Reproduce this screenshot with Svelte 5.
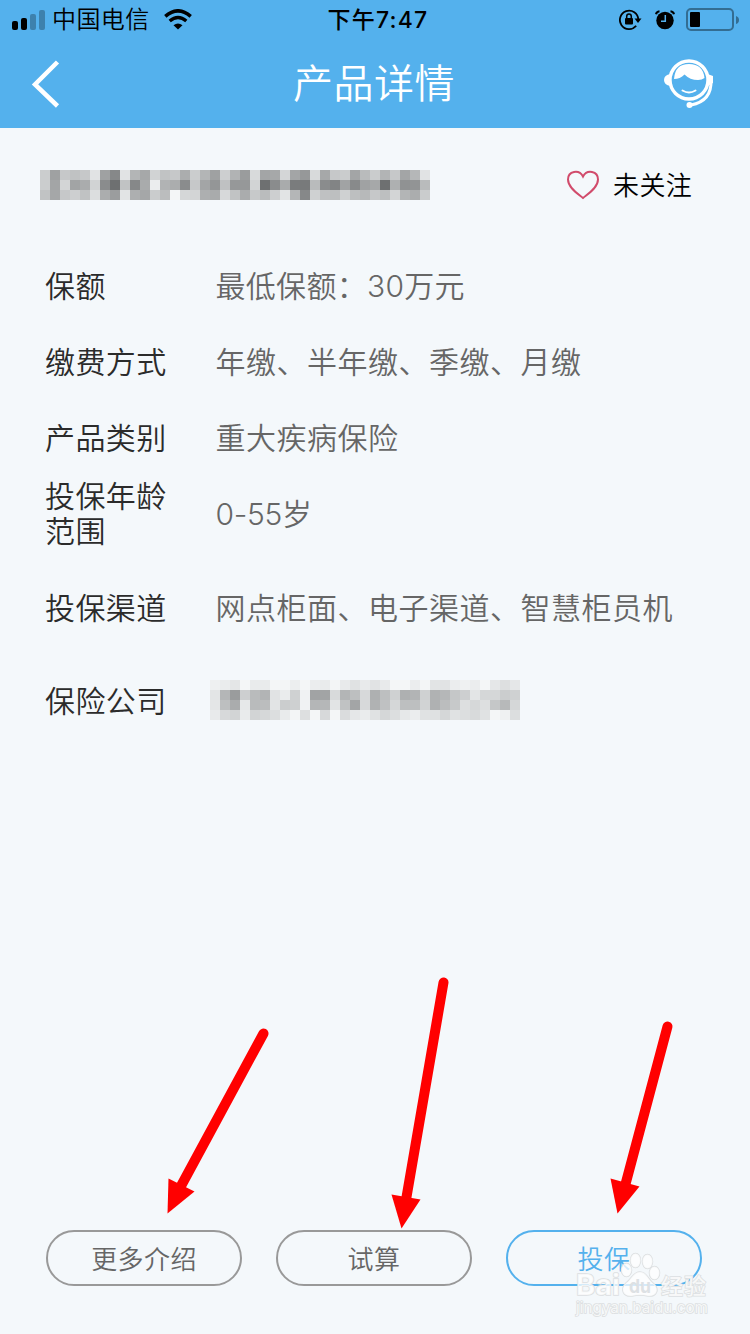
<script>
	// Greyscale levels of the masked texts, one hex pair for each 10px block
	const nameMask = [
		'cb9fc6c0c6e19f86e1b3a6d1c1c6abcbb39fcdb19ad8a3a6d4a396d8a6c6caa3b9cab2c6a3b5e1',
		'cba3d3a2aad18a6ec186a9ebb1ab8ac6a394bf9696d26e8aa97a78b98a82a188a0a66eae9092b9',
		'c1a5c6cdc0dcab9be2ada5cabbf4d5d3ada9d7c1aac7bacde2b486cfbfbdcfbdb7c6bdd3b3abca'
	];
	const companyMask = [
		'eeeae4f4e9e9f4f3ecf4ebe9f3e8e0e8e1e8f4f4ebf3e2e1ebefebf4e5dde5',
		'e3b49acdb9b2e1eacff0a1a2d8b3bdd7aebdcfaeb2cfb0b5c5cde3d5d5cbcf',
		'e4bdaae6b9bbe2cbcef0b4b5e2c0a3d7b0bfd5bdbdd1afbbc7ddd6ddc5b7d5',
		'e8d7d2e9d2d6dce9f3ddf4d7f4dae5eae0d5dce6ebe0dfd5e0dcd8e0f4efdc'
	];

	const rows = [
		{ label: '保额', value: '最低保额：30万元', height: 76, tracking: 0.3 },
		{ label: '缴费方式', value: '年缴、半年缴、季缴、月缴', height: 76 },
		{ label: '产品类别', value: '重大疾病保险', height: 76 },
		{ label: '投保年龄范围', value: '0-55岁', height: 76, tracking: -0.3 },
		{ label: '投保渠道', value: '网点柜面、电子渠道、智慧柜员机', height: 112 },
		{ label: '保险公司', mask: companyMask, height: 74 }
	];

	const actions = [
		{ label: '更多介绍' },
		{ label: '试算' },
		{ label: '投保', primary: true }
	];

	let followed = $state(false);

	function blocks(line) {
		return line.match(/../g).map((v) => {
			const n = parseInt(v, 16);
			return `rgb(${n}, ${Math.min(n + 2, 248)}, ${Math.min(n + 3, 251)})`;
		});
	}
</script>

{#snippet mosaic(mask)}
	<svg class="mosaic" width={mask[0].length * 5} height={mask.length * 10} shape-rendering="crispEdges">
		{#each mask as line, y}
			{#each blocks(line) as fill, x}
				<rect x={x * 10} y={y * 10} width="10" height="10" {fill} />
			{/each}
		{/each}
	</svg>
{/snippet}

<div class="page">
	<header>
		<div class="status">
			<div class="status-left">
				<svg class="signal" width="34" height="20">
					<rect x="0" y="11" width="6" height="9" rx="2" />
					<rect x="9" y="8" width="6" height="12" rx="2" />
					<rect x="18" y="4" width="6" height="16" rx="2" opacity=".27" />
					<rect x="27" y="0" width="6" height="20" rx="2" opacity=".27" />
				</svg>
				<span class="carrier">中国电信</span>
				<svg class="wifi" width="28" height="21" viewBox="0 0 28 21">
					<path d="M1.3 7.3Q14-3.600 26.700 7.300" fill="none" stroke="#000" stroke-width="3.600" />
					<path d="M5.700 12Q14 5 22.300 12" fill="none" stroke="#000" stroke-width="3.400" />
					<path d="M9.500 16.300Q14 12.500 18.500 16.300L14 20.500Z" />
				</svg>
			</div>
			<span class="time">下午7:47</span>
			<div class="status-right">
				<svg width="23" height="22" viewBox="0 0 23 22">
					<path d="M17.200 16.800A9.200 9.200 0 1 1 19.300 10.500" fill="none" stroke="#000" stroke-width="1.800" />
					<path d="M15.500 9.500H22.500L19 14Z" />
					<rect x="6" y="9" width="8" height="6.500" rx="1" />
					<path d="M7.700 9.500V7.500a2.300 2.500 0 0 1 4.600 0V9.500" fill="none" stroke="#000" stroke-width="1.500" />
				</svg>
				<svg class="alarm" width="20" height="20" viewBox="0 0 20 20">
					<circle cx="10" cy="10.500" r="8.700" />
					<path d="M1 4.300Q1.500 1.500 4.500 1.200M15.500 1.200Q18.500 1.500 19 4.300" fill="none" stroke="#000" stroke-width="2" />
					<path d="M10.300 5V11.200H6" fill="none" stroke="#54b1ed" stroke-width="1.500" />
				</svg>
				<svg class="battery" width="54" height="24" viewBox="0 0 54 24">
					<rect x="1" y="1" width="46" height="21" rx="4" fill="none" stroke="#336d92" stroke-width="2" />
					<rect x="4" y="4" width="10" height="15" rx="1" />
					<path d="M50 8Q53 9 53 12T50 16Z" fill="#336d92" />
				</svg>
			</div>
		</div>
		<div class="navbar">
			<button class="back" aria-label="返回">
				<svg width="30" height="50" viewBox="0 0 30 50">
					<path d="M26.500 3L4 25.500L26.500 47" fill="none" stroke="#fff" stroke-width="4.500" />
				</svg>
			</button>
			<h1>产品详情</h1>
			<button class="service" aria-label="客服">
				<svg width="51" height="51" viewBox="0 0 51 51">
					<circle cx="25" cy="21" r="19" fill="none" stroke="#fff" stroke-width="3.400" />
					<path d="M6.500 15Q0 16 0 21T6.500 27ZM43.500 15L49 17V24L43.500 27Z" fill="#fff" />
					<path d="M10 20Q11 5 25 5T40.500 19Q38 21 34 21Q26 21 20.500 15.500Q16 20 10 20Z" fill="#fff" />
					<path d="M18.500 31.500Q25 35.500 31.500 31.500" fill="none" stroke="#fff" stroke-width="2" stroke-linecap="round" />
					<path d="M47 21Q48 42 27 46" fill="none" stroke="#fff" stroke-width="3" />
					<circle cx="25.500" cy="46" r="3" fill="#fff" />
				</svg>
			</button>
		</div>
	</header>

	<section class="product">
		{@render mosaic(nameMask)}
		<button class="follow" onclick={() => (followed = !followed)}>
			<svg width="34" height="30" viewBox="0 0 34 30">
				<path
					d="M17 28C13 24.500 2 18 2 9.500C2 1 13-1 17 6.500C21-1 32 1 32 9.500C32 18 21 24.500 17 28Z"
					fill={followed ? '#d14b6b' : 'none'}
					stroke="#d14b6b"
					stroke-width="2"
				/>
			</svg>
			<span>{followed ? '已关注' : '未关注'}</span>
		</button>
	</section>

	<dl>
		{#each rows as row}
			<div class="row" style="height: {row.height}px">
				<dt>{row.label}</dt>
				<dd class:masked={row.mask} style="letter-spacing: {row.tracking ?? 0.5}px">
					{#if row.mask}
						{@render mosaic(row.mask)}
					{:else}
						{row.value}
					{/if}
				</dd>
			</div>
		{/each}
	</dl>

	<footer>
		{#each actions as action}
			<button class="action" class:primary={action.primary}>{action.label}</button>
		{/each}
	</footer>

	<svg class="arrows" width="750" height="1334" viewBox="0 0 750 1334">
		<g stroke="#f00" stroke-width="10" stroke-linecap="round">
			<path d="M263.500 1033.500L181 1186" />
			<path d="M443.500 982.500L406 1200" />
			<path d="M667.500 1026.500L625 1186" />
		</g>
		<g fill="#f00">
			<path d="M168.500 1178.500L194.500 1191.500L167.500 1213.500Z" />
			<path d="M391.500 1194.500L420.500 1199.500L401.500 1228.500Z" />
			<path d="M610.500 1178.500L639.500 1186.500L617.500 1213.500Z" />
		</g>
	</svg>

	<svg class="watermark" width="150" height="80" viewBox="0 0 150 80">
		<g class="mark">
			<ellipse cx="54.500" cy="27" rx="5" ry="6.500" />
			<ellipse cx="63.500" cy="17.500" rx="5" ry="7" />
			<ellipse cx="75.500" cy="18.500" rx="5" ry="7" />
			<ellipse cx="82.500" cy="30" rx="5" ry="6.500" />
			<path d="M68 29C75 29 76 37 82 41C88 47 84 54 76 53Q68 51 60 53C51 54 48 46 54 40C60 36 61 29 68 29Z" />
			<text x="4" y="51.500" font-size="28" font-weight="700" textLength="44" lengthAdjust="spacingAndGlyphs">Bai</text>
			<text class="du" x="57" y="49.500" font-size="19" font-weight="700" textLength="22" lengthAdjust="spacingAndGlyphs">du</text>
			<text x="89" y="51" font-size="22" font-weight="500" textLength="45">经验</text>
			<text class="url" x="4" y="69.500" font-size="15" textLength="132" lengthAdjust="spacingAndGlyphs">jingyan.baidu.com</text>
		</g>
	</svg>
</div>

<style>
	:global(body) {
		margin: 0;
		background: #f4f8fb;
	}

	.page {
		position: relative;
		display: flex;
		flex-direction: column;
		width: 750px;
		height: 1334px;
		overflow: hidden;
		background: #f4f8fb;
		font-family: 'Inter', 'Noto Sans CJK SC', sans-serif;
		font-weight: 350;
	}

	button {
		padding: 0;
		border: none;
		background: none;
		font: inherit;
		cursor: pointer;
	}

	svg {
		display: block;
		flex-shrink: 0;
	}

	header {
		height: 128px;
		background: #54b1ed;
	}

	.status {
		display: grid;
		grid-template-columns: 1fr auto 1fr;
		align-items: center;
		height: 40px;
		padding: 0 10px 0 12px;
		font-size: 24px;
		line-height: 40px;
	}

	.status-left,
	.status-right {
		display: flex;
		align-items: center;
	}

	.status-right {
		justify-content: flex-end;
	}

	.status-right svg {
		margin-bottom: 1px;
	}

	.carrier {
		margin-left: 6px;
		letter-spacing: 0.4px;
	}

	.signal,
	.wifi {
		margin-bottom: 1px;
	}

	.wifi {
		margin-left: 14px;
	}

	.time {
		margin-right: -4px;
		font-size: 23px;
		font-weight: 500;
		letter-spacing: 1.2px;
	}

	.status-right .alarm {
		margin: 0 11px 1px 13px;
	}

	.navbar {
		display: grid;
		grid-template-columns: 1fr auto 1fr;
		align-items: center;
		height: 88px;
		padding: 0 35px 0 31px;
	}

	.back {
		justify-self: start;
	}

	.service {
		justify-self: end;
	}

	h1 {
		margin: 0 -1px 6px 1px;
		color: #fff;
		font-size: 40px;
		font-weight: 350;
		letter-spacing: 0.5px;
	}

	.product {
		display: flex;
		align-items: center;
		justify-content: space-between;
		height: 114px;
		padding: 0 58px 0 40px;
	}

	.follow {
		display: flex;
		align-items: center;
		gap: 13px;
		color: #000;
		font-size: 26px;
		letter-spacing: 0.3px;
	}

	.follow span {
		margin-top: -3px;
	}

	dl {
		margin: 6px 0 0;
		padding-left: 45px;
	}

	.row {
		display: flex;
		align-items: center;
	}

	dt {
		width: 122px;
		color: #2b2b2b;
		font-size: 30px;
		line-height: 35px;
		letter-spacing: 0.4px;
	}

	dd {
		margin: 0 0 0 48.5px;
		color: #666;
		font-size: 30px;
		line-height: 35px;
		white-space: nowrap;
	}

	.masked {
		margin: 0 0 2px 43px;
	}

	footer {
		display: flex;
		gap: 34px;
		margin-top: auto;
		padding: 0 48px 48px 46px;
	}

	.action {
		box-sizing: border-box;
		width: 196px;
		height: 56px;
		padding-bottom: 2px;
		border: 2px solid #999;
		border-radius: 28px;
		color: #666;
		font-size: 26px;
		letter-spacing: 0.4px;
	}

	.primary {
		border-color: #54b1ed;
		color: #54b1ed;
	}

	.arrows {
		position: absolute;
		top: 0;
		left: 0;
		pointer-events: none;
	}

	.watermark {
		position: absolute;
		right: 28px;
		bottom: 11px;
		pointer-events: none;
	}

	.mark {
		fill: rgba(255, 255, 255, 0.75);
		stroke: #dcdfe1;
		stroke-width: 1.5px;
		paint-order: stroke;
	}

	.du {
		fill: #dde1e4;
		stroke: none;
	}

	.url {
		font-weight: 400;
	}
</style>
